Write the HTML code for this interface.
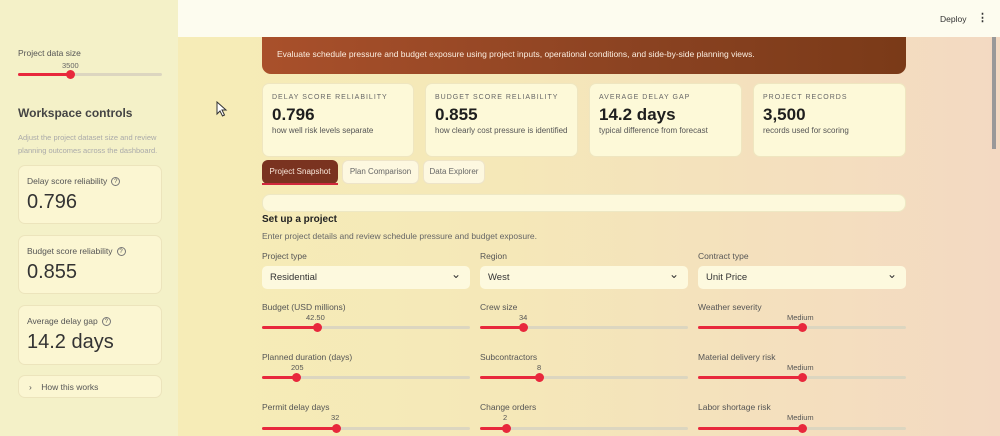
<!DOCTYPE html><html><head><meta charset="utf-8"><style>
*{box-sizing:border-box;margin:0;padding:0}
body{width:1000px;height:436px;overflow:hidden;position:relative;font-family:"Liberation Sans",sans-serif;background:linear-gradient(90deg,#f6efb6 0%,#f5e8b8 50%,#f3d9c2 100%);color:#333}
.sb{position:absolute;left:0;top:0;width:178px;height:436px;background:#f4f1c8}
.hdr{position:absolute;left:178px;top:0;width:822px;height:37px;background:#fdfcef}
.abs{position:absolute}
.t{position:absolute;white-space:nowrap}
.track{position:absolute;height:3px;background:#dcd6c0;border-radius:2px}
.fill{position:absolute;height:3px;background:#e8283c;left:0;top:0;border-radius:2px}
.th{position:absolute;width:9px;height:9px;border-radius:50%;background:#e8283c;top:-3px}
.card{position:absolute;background:#fbf6d2;border:1px solid #ece4bc;border-radius:7px}
.mc{position:absolute;background:#fdf9d8;border:1px solid #efe6c0;border-radius:7px;top:83px;height:74px}
.mc .l{position:absolute;left:9px;top:10px;font-size:7px;letter-spacing:1px;color:#666}
.mc .v{position:absolute;left:9px;top:21px;font-size:17px;font-weight:bold;color:#1e1e1e}
.mc .s{position:absolute;left:9px;top:42px;font-size:8px;color:#555}
.lab{font-size:8.5px;color:#555}
.sel{position:absolute;height:23px;width:208px;background:#fdf9de;border-radius:5px;font-size:9.5px;color:#333;padding:6px 8px}
.sel:after{content:"⌄";position:absolute;right:9px;top:1px;font-size:12px}
.q{display:inline-block;width:9px;height:9px;border:1px solid #777;border-radius:50%;font-size:6px;text-align:center;line-height:8px;margin-left:4px;vertical-align:middle}
</style></head><body>
<div class="sb"></div>
<div class="hdr"></div>
<div class="t" style="left:940px;top:14px;font-size:8.5px;color:#333">Deploy</div>
<div class="t" style="left:977px;top:11px;font-size:11px;font-weight:bold;color:#333">⋮</div>
<div class="abs" style="left:992px;top:37px;width:4px;height:112px;background:#999"></div>

<!-- sidebar -->
<div class="t lab" style="left:18px;top:48px">Project data size</div>
<div class="t" style="left:62px;top:61px;font-size:7.5px;color:#666">3500</div>
<div class="track" style="left:18px;top:73px;width:144px"><div class="fill" style="width:52px"></div><div class="th" style="left:48px"></div></div>
<div class="t" style="left:18px;top:106px;font-size:12px;font-weight:bold;color:#444">Workspace controls</div>
<div class="t" style="left:18px;top:131px;font-size:7.5px;color:#aaa;line-height:13px">Adjust the project dataset size and review<br>planning outcomes across the dashboard.</div>
<div class="card" style="left:18px;top:165px;width:144px;height:59px"><div class="t lab" style="left:8px;top:10px">Delay score reliability<span class="q">?</span></div><div class="t" style="left:8px;top:25px;font-size:20px;color:#333">0.796</div></div>
<div class="card" style="left:18px;top:235px;width:144px;height:59px"><div class="t lab" style="left:8px;top:10px">Budget score reliability<span class="q">?</span></div><div class="t" style="left:8px;top:25px;font-size:20px;color:#333">0.855</div></div>
<div class="card" style="left:18px;top:305px;width:144px;height:60px"><div class="t lab" style="left:8px;top:10px">Average delay gap<span class="q">?</span></div><div class="t" style="left:8px;top:25px;font-size:20px;color:#333">14.2 days</div></div>
<div class="card" style="left:18px;top:375px;width:144px;height:23px"><div class="t lab" style="left:10px;top:6px">›&nbsp;&nbsp;&nbsp;&nbsp;How this works</div></div>

<!-- banner -->
<div class="abs" style="left:262px;top:37px;width:644px;height:37px;background:linear-gradient(90deg,#a9502b,#8a4221 60%,#7a3a18);border-radius:0 0 9px 9px"></div>
<div class="t" style="left:277px;top:49px;font-size:8.5px;color:#fbeee0">Evaluate schedule pressure and budget exposure using project inputs, operational conditions, and side-by-side planning views.</div>

<div class="mc" style="left:262px;width:152px"><div class="l">DELAY SCORE RELIABILITY</div><div class="v">0.796</div><div class="s">how well risk levels separate</div></div>
<div class="mc" style="left:425px;width:153px"><div class="l">BUDGET SCORE RELIABILITY</div><div class="v">0.855</div><div class="s">how clearly cost pressure is identified</div></div>
<div class="mc" style="left:589px;width:153px"><div class="l">AVERAGE DELAY GAP</div><div class="v">14.2 days</div><div class="s">typical difference from forecast</div></div>
<div class="mc" style="left:753px;width:153px"><div class="l">PROJECT RECORDS</div><div class="v">3,500</div><div class="s">records used for scoring</div></div>

<!-- tabs -->
<div class="abs" style="left:262px;top:160px;width:76px;height:24px;background:#7a3320;border-radius:6px;color:#fbe9dc;font-size:8px;text-align:center;line-height:24px">Project Snapshot</div>
<div class="abs" style="left:262px;top:183px;width:76px;height:2px;background:#d0283c"></div>
<div class="abs" style="left:342px;top:160px;width:77px;height:24px;background:#fdf8e0;border:1px solid #eee4c8;border-radius:6px;color:#666;font-size:8px;text-align:center;line-height:22px">Plan Comparison</div>
<div class="abs" style="left:423px;top:160px;width:62px;height:24px;background:#fdf8e0;border:1px solid #eee4c8;border-radius:6px;color:#666;font-size:8px;text-align:center;line-height:22px">Data Explorer</div>
<div class="abs" style="left:262px;top:194px;width:644px;height:18px;background:#fdf9dc;border:1px solid #eee8c4;border-radius:8px"></div>

<div class="t" style="left:262px;top:214px;font-size:10px;font-weight:bold;color:#222">Set up a project</div>
<div class="t" style="left:262px;top:231px;font-size:8.5px;color:#666">Enter project details and review schedule pressure and budget exposure.</div>

<div class="t lab" style="left:262px;top:251px">Project type</div>
<div class="t lab" style="left:480px;top:251px">Region</div>
<div class="t lab" style="left:698px;top:251px">Contract type</div>
<div class="sel" style="left:262px;top:266px">Residential</div>
<div class="sel" style="left:480px;top:266px">West</div>
<div class="sel" style="left:698px;top:266px">Unit Price</div>

<div class="t lab" style="left:262px;top:302px">Budget (USD millions)</div>
<div class="t lab" style="left:480px;top:302px">Crew size</div>
<div class="t lab" style="left:698px;top:302px">Weather severity</div>
<div class="t" style="left:306px;top:313px;font-size:7.5px;color:#555">42.50</div>
<div class="t" style="left:519px;top:313px;font-size:7.5px;color:#555">34</div>
<div class="t" style="left:787px;top:313px;font-size:7.5px;color:#555">Medium</div>
<div class="track" style="left:262px;top:326px;width:208px"><div class="fill" style="width:55px"></div><div class="th" style="left:51px"></div></div>
<div class="track" style="left:480px;top:326px;width:208px"><div class="fill" style="width:43px"></div><div class="th" style="left:39px"></div></div>
<div class="track" style="left:698px;top:326px;width:208px"><div class="fill" style="width:104px"></div><div class="th" style="left:100px"></div></div>

<div class="t lab" style="left:262px;top:352px">Planned duration (days)</div>
<div class="t lab" style="left:480px;top:352px">Subcontractors</div>
<div class="t lab" style="left:698px;top:352px">Material delivery risk</div>
<div class="t" style="left:291px;top:363px;font-size:7.5px;color:#555">205</div>
<div class="t" style="left:537px;top:363px;font-size:7.5px;color:#555">8</div>
<div class="t" style="left:787px;top:363px;font-size:7.5px;color:#555">Medium</div>
<div class="track" style="left:262px;top:376px;width:208px"><div class="fill" style="width:34px"></div><div class="th" style="left:30px"></div></div>
<div class="track" style="left:480px;top:376px;width:208px"><div class="fill" style="width:59px"></div><div class="th" style="left:55px"></div></div>
<div class="track" style="left:698px;top:376px;width:208px"><div class="fill" style="width:104px"></div><div class="th" style="left:100px"></div></div>

<div class="t lab" style="left:262px;top:402px">Permit delay days</div>
<div class="t lab" style="left:480px;top:402px">Change orders</div>
<div class="t lab" style="left:698px;top:402px">Labor shortage risk</div>
<div class="t" style="left:331px;top:413px;font-size:7.5px;color:#555">32</div>
<div class="t" style="left:503px;top:413px;font-size:7.5px;color:#555">2</div>
<div class="t" style="left:787px;top:413px;font-size:7.5px;color:#555">Medium</div>
<div class="track" style="left:262px;top:427px;width:208px"><div class="fill" style="width:74px"></div><div class="th" style="left:70px"></div></div>
<div class="track" style="left:480px;top:427px;width:208px"><div class="fill" style="width:26px"></div><div class="th" style="left:22px"></div></div>
<div class="track" style="left:698px;top:427px;width:208px"><div class="fill" style="width:104px"></div><div class="th" style="left:100px"></div></div>

<svg class="abs" style="left:216px;top:101px" width="12" height="16" viewBox="0 0 12 16"><path d="M1 1 L1 13 L4 10 L6.5 15 L8.5 14 L6 9 L10 9 Z" fill="#fff" stroke="#333" stroke-width="1"/></svg>
</body></html>
